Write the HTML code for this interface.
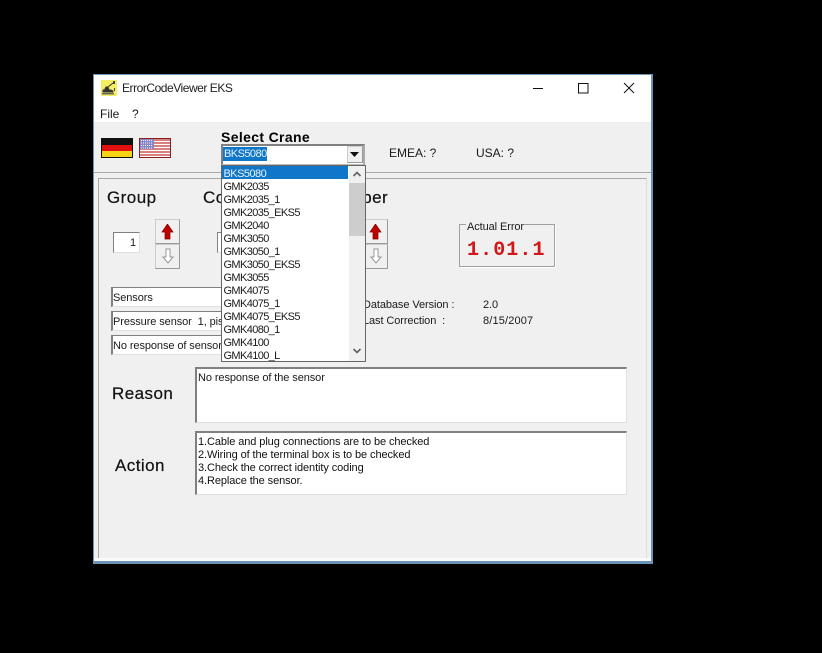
<!DOCTYPE html>
<html><head><meta charset="utf-8"><style>
html,body{margin:0;padding:0;background:#000}
body{width:822px;height:653px;position:relative;overflow:hidden;font-family:"Liberation Sans",sans-serif;color:#000}
div,svg{position:absolute;box-sizing:border-box}
.t{font-size:11px;letter-spacing:-.09px;line-height:13px;white-space:pre;color:#1a1a1a}
.c{letter-spacing:-.62px}
.u{font-size:12px;line-height:14px;white-space:pre;color:#1a1a1a}
.h{font-size:17px;line-height:18px;white-space:pre;color:#111;letter-spacing:.45px;-webkit-text-stroke:.2px #111}
.b{font-weight:bold;font-size:14px;line-height:14px;white-space:pre;letter-spacing:.35px}
.f{background:#fff;border-top:2px solid #808080;border-left:2px solid #808080;border-right:1px solid #e0e0e0;border-bottom:1px solid #e0e0e0}
.bt{background:#f0f0f0;border:1px solid #ccc;border-right-color:#999;border-bottom-color:#999}
</style></head><body>
<div style="left:92.500px;top:73.500px;width:560px;height:490px;background:#6a93b8"></div>
<div style="left:94px;top:75px;width:557px;height:486px;background:#f0f0f0"></div>
<div style="left:94px;top:75px;width:557px;height:48px;background:#fff"></div>
<div style="left:94px;top:122px;width:557px;height:2px;background:#eee"></div>
<div style="left:94px;top:172px;width:557px;height:1px;background:#a8a8a8"></div>
<div style="left:98px;top:178px;width:549px;height:380px;border:1px solid #a8a8a8;border-right-color:#ddd;border-bottom:0"></div>
<div style="left:94px;top:558px;width:557px;height:3px;background:#fafafa"></div>

<svg style="left:101px;top:80px" width="16" height="16" viewBox="0 0 16 16"><rect width="16" height="16" fill="#f4ee60"/><path d="M2 10h8l2 1v1H2zM3.500 10l1.500-3h2l1 3zM7 7l5-4" fill="#333" stroke="#333"/><path d="M12 1h2v3h-2zM13 8h1v3h-1z" fill="#444"/><rect x="1" y="13" width="12" height="1.500" fill="#666"/></svg>
<div class="u" style="left:122px;top:81px;color:#222;letter-spacing:-.46px">ErrorCodeViewer EKS</div>
<svg style="left:520px;top:80px" width="122" height="16" viewBox="0 0 122 16" fill="none" stroke="#111"><path d="M13 8.500H23"/><rect x="58.500" y="3.500" width="9.500" height="9.500"/><path d="M104 3l10 10M114 3l-10 10"/></svg>
<div class="u" style="left:100px;top:107px">File</div>
<div class="u" style="left:132px;top:107px">?</div>

<svg style="left:101px;top:138px" width="32" height="20" viewBox="0 0 32 20"><rect width="32" height="20" fill="#111"/><rect x="1" y="7" width="30" height="6" fill="#e11111"/><rect x="1" y="13" width="30" height="6" fill="#f7d416"/></svg>
<svg style="left:139px;top:138px" width="32" height="20" viewBox="0 0 32 20"><rect width="32" height="20" fill="#8a1c1c"/><rect x="1" y="1" width="30" height="18" fill="#fff"/><path d="M1 2h30M1 5h30M1 8h30M1 11h30M1 14h30M1 17h30" stroke="#cc5555" stroke-width="1.400"/><rect x="1" y="1" width="14" height="10" fill="#8888c8"/><path d="M2 2.500h12M2 5h12M2 7.500h12M2 10h12" stroke="#eeeefa" stroke-dasharray="1 1"/></svg>

<div class="b" style="left:221px;top:129.500px">Select Crane</div>
<div class="f" style="left:221px;top:144px;width:144px;height:21px;border-right:2px solid #aaa;border-bottom:1px solid #bbb"></div>
<div style="left:223px;top:147px;width:44px;height:14px;background:#0f76c8"></div>
<div class="t c" style="left:224px;top:147.500px;color:#eaf4ff;letter-spacing:-.55px">BKS5080</div>
<div class="bt" style="left:347px;top:146px;width:16px;height:17px"></div>
<svg style="left:350px;top:152px" width="10" height="6"><path d="M0 0h9L4.500 5z" fill="#111"/></svg>
<div class="u" style="left:389px;top:146px">EMEA: ?</div>
<div class="u" style="left:476px;top:146px">USA: ?</div>

<div class="h" style="left:107px;top:189px">Group</div>
<div class="h" style="left:203px;top:189px">Code</div>
<div class="h" style="left:325px;top:189px">Number</div>

<div class="f" style="left:113px;top:232px;width:27px;height:21px;border-width:1px"></div>
<div class="t" style="left:130px;top:237px">1</div>
<div class="bt" style="left:155px;top:219px;width:25px;height:25px"></div>
<div class="bt" style="left:155px;top:244px;width:25px;height:25px"></div>
<svg style="left:161px;top:224px" width="13" height="16"><path d="M6.500 0L12 8H9v7H4V8H1z" fill="#c00000" stroke="#700" stroke-width=".7"/></svg>
<svg style="left:162px;top:248px" width="12" height="16"><path d="M4 1h4v8h3L6 15 1 9h3z" fill="#fff" stroke="#999"/></svg>
<div class="f" style="left:217px;top:232px;width:20px;height:21px;border-width:1px"></div>
<div class="bt" style="left:363px;top:219px;width:25px;height:25px"></div>
<div class="bt" style="left:363px;top:244px;width:25px;height:25px"></div>
<svg style="left:369px;top:224px" width="13" height="16"><path d="M6.500 0L12 8H9v7H4V8H1z" fill="#c00000" stroke="#700" stroke-width=".7"/></svg>
<svg style="left:370px;top:248px" width="12" height="16"><path d="M4 1h4v8h3L6 15 1 9h3z" fill="#fff" stroke="#999"/></svg>

<div class="f" style="left:111px;top:287px;width:120px;height:20px;border-width:1px 1px 1px 2px"></div>
<div class="t" style="left:113px;top:292px">Sensors</div>
<div class="f" style="left:111px;top:311px;width:120px;height:20px;border-width:1px 1px 1px 2px"></div>
<div class="t" style="left:113px;top:316px">Pressure sensor  1, pist</div>
<div class="f" style="left:111px;top:335px;width:120px;height:20px;border-width:1px 1px 1px 2px"></div>
<div class="t" style="left:113px;top:340px">No response of sensor</div>

<div class="t" style="left:363px;top:299px">Database Version :</div>
<div class="t" style="left:363px;top:315px">Last Correction  :</div>
<div class="t" style="left:483px;top:299px">2.0</div>
<div class="t" style="left:483px;top:315px;letter-spacing:.15px">8/15/2007</div>

<div style="left:459px;top:224px;width:96px;height:43px;border:1px solid #a0a0a0;box-shadow:1px 1px 0 #fff"></div>
<div style="left:466px;top:220px;height:13px;width:58px;background:#f0f0f0"></div>
<div class="t" style="left:467px;top:221px">Actual Error</div>
<div style="left:467px;top:240px;font:bold 20px/22px 'Liberation Mono',monospace;color:#d01818;white-space:pre;letter-spacing:1.1px">1.01.1</div>

<div class="h" style="left:112px;top:385px">Reason</div>
<div class="h" style="left:115px;top:457px">Action</div>
<div class="f" style="left:195px;top:367px;width:432px;height:56px;border-left:2px solid #808080"></div>
<div class="t" style="left:198px;top:372px">No response of the sensor</div>
<div class="f" style="left:195px;top:431px;width:432px;height:64px;border-left:2px solid #808080"></div>
<div class="t" style="left:198px;top:435.500px;color:#111">1.Cable and plug connections are to be checked
2.Wiring of the terminal box is to be checked
3.Check the correct identity coding
4.Replace the sensor.</div>

<div style="left:221px;top:165px;width:145px;height:197px;background:#fff;border:1px solid #666"></div>
<div style="left:222px;top:166px;width:126px;height:13px;background:#0f76c8"></div>
<div class="t c" style="left:223.500px;top:167.500px;color:#eaf4ff;letter-spacing:-.55px">BKS5080</div>
<div class="t c" style="left:223.500px;top:181px">GMK2035
GMK2035_1
GMK2035_EKS5
GMK2040
GMK3050
GMK3050_1
GMK3050_EKS5
GMK3055
GMK4075
GMK4075_1
GMK4075_EKS5
GMK4080_1
GMK4100
GMK4100_L</div>
<div style="left:349px;top:166px;width:16px;height:195px;background:#f0f0f0"></div>
<div style="left:349px;top:183px;width:16px;height:53px;background:#cdcdcd"></div>
<svg style="left:349px;top:166px" width="16" height="195" fill="none" stroke="#606060" stroke-width="1.600"><path d="M4.500 10l3.500-3.500 3.500 3.500M4.500 183l3.500 3.500 3.500-3.500"/></svg>
</body></html>
